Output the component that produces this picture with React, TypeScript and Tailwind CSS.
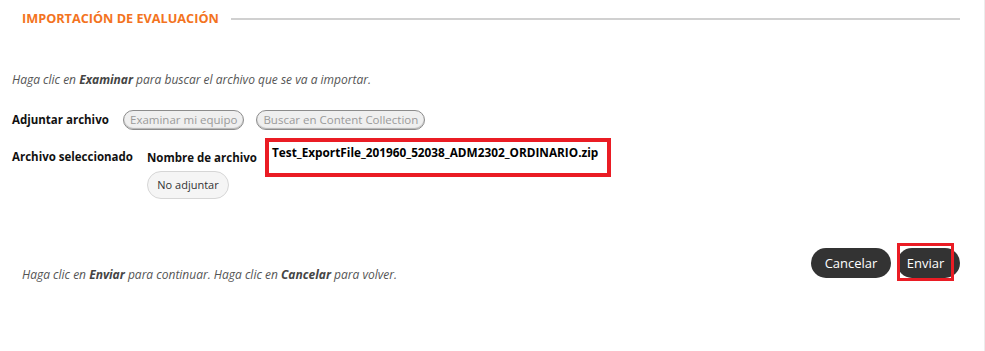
import React from "react";

export default function App() {
  return (
    <div
      className="relative w-[985px] h-[351px] bg-white overflow-hidden border-r border-[#ececec]"
      style={{ fontFamily: '"Open Sans", "Liberation Sans", sans-serif' }}
    >
      <div className="flex items-center pl-[22px] pr-[24px] pt-[8px] h-[20px] box-content">
        <span className="text-[12.7px] font-bold text-[#f37321] leading-none">
          IMPORTACIÓN DE EVALUACIÓN
        </span>
        <div className="flex-1 ml-[12px] h-[2px] bg-[#d0d0d0] mt-[1px]" />
      </div>

      <div className="pl-[12px] pt-[43px] text-[12px] italic text-[#555]">
        Haga clic en <b className="text-[#444]">Examinar</b> para buscar el archivo que se va a importar.
      </div>

      <div className="flex items-center pl-[12px] pt-[21px]">
        <span className="text-[11.5px] font-bold text-[#111] w-[111px]">Adjuntar archivo</span>
        <button className="h-[20px] px-[6px] rounded-full bg-[#efefef] border border-[#8c8c8c] shadow-[inset_0_-1px_1px_rgba(0,0,0,0.25)] text-[11.5px] text-[#9a9a9a] leading-none">
          Examinar mi equipo
        </button>
        <button className="ml-[12px] h-[20px] px-[6px] rounded-full bg-[#efefef] border border-[#8c8c8c] shadow-[inset_0_-1px_1px_rgba(0,0,0,0.25)] text-[11.5px] text-[#9a9a9a] leading-none">
          Buscar en Content Collection
        </button>
      </div>

      <div className="flex items-start pl-[12px] pt-[8px]">
        <span className="text-[11.5px] font-bold text-[#111] w-[135px] mt-[10px]">Archivo seleccionado</span>
        <div className="flex flex-col items-start w-[111px]">
          <span className="text-[11.5px] font-bold text-[#111] mt-[11px] whitespace-nowrap">Nombre de archivo</span>
          <button className="mt-[5px] h-[28px] w-[82px] rounded-full bg-[#f5f5f5] border border-[#d6d6d6] text-[11px] text-[#333]">
            No adjuntar
          </button>
        </div>
        <div className="ml-[7px] w-[346px] h-[39px] border-[4px] border-[#ea1c24] pl-[3px] pt-0 leading-[18px]">
          <span className="text-[11.8px] font-bold text-[#000] whitespace-nowrap">
            Test_ExportFile_201960_52038_ADM2302_ORDINARIO.zip
          </span>
        </div>
      </div>

      <div className="flex items-start pl-[22px] pr-[24px] mt-[46px]">
        <span className="text-[12px] leading-[18px] italic text-[#555] mt-[21px] flex-1">
          Haga clic en <b className="text-[#444]">Enviar</b> para continuar. Haga clic en{" "}
          <b className="text-[#444]">Cancelar</b> para volver.
        </span>
        <button className="mt-[3px] h-[30px] w-[80px] rounded-full bg-[#333] text-white text-[13px]">Cancelar</button>
        <div className="relative ml-[6px] mt-[3px]">
          <button className="h-[30px] w-[63px] rounded-full bg-[#333] text-white text-[13px] pr-[6px]">Enviar</button>
          <div className="absolute left-0 top-[-5px] w-[57px] h-[38px] border-[3px] border-[#ea1c24] pointer-events-none" />
        </div>
      </div>
    </div>
  );
}
